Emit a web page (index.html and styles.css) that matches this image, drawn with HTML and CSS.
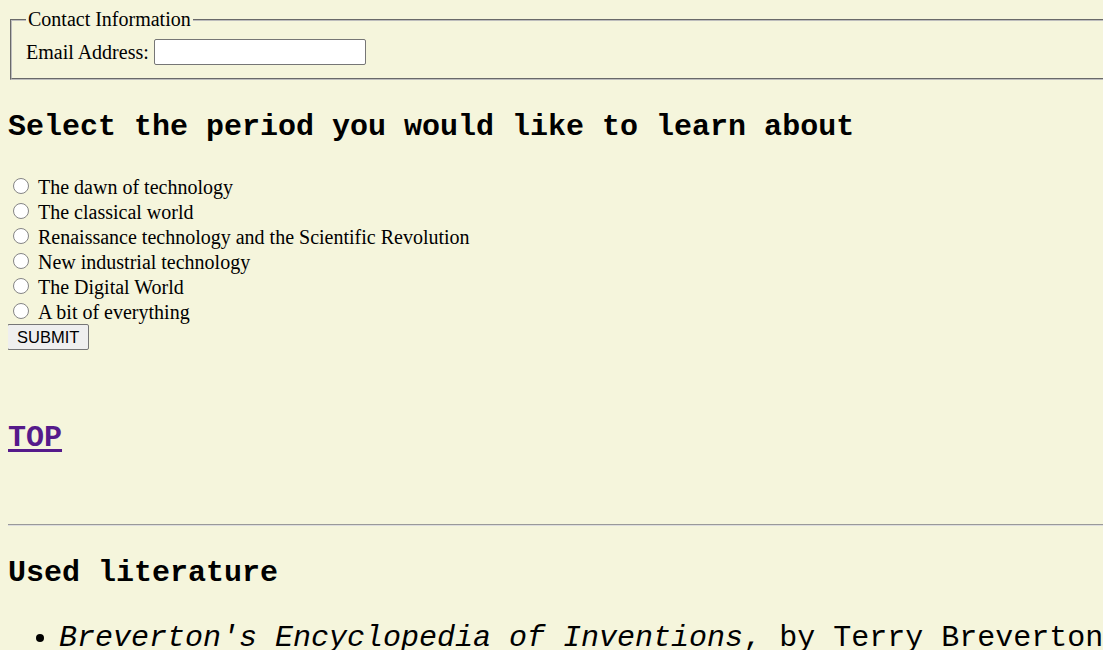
FILE: index.html
```html
<!DOCTYPE html>
<html>
<head>
<meta charset="utf-8">
<link rel="stylesheet" href="styles.css">
</head>
<body>
<form class="form">
  <fieldset class="contact">
    <legend class="contact-legend">Contact Information</legend>
    <label class="email-label">Email Address: <input class="email-input" type="text"></label>
  </fieldset>
  <h2 class="heading period-heading">Select the period you would like to learn about</h2>
  <div class="options">
    <label class="option"><input class="radio" type="radio" name="period"><span>The dawn of technology</span></label>
    <label class="option"><input class="radio" type="radio" name="period"><span>The classical world</span></label>
    <label class="option"><input class="radio" type="radio" name="period"><span>Renaissance technology and the Scientific Revolution</span></label>
    <label class="option"><input class="radio" type="radio" name="period"><span>New industrial technology</span></label>
    <label class="option"><input class="radio" type="radio" name="period"><span>The Digital World</span></label>
    <label class="option"><input class="radio" type="radio" name="period"><span>A bit of everything</span></label>
  </div>
  <button class="submit" type="button">SUBMIT</button>
</form>
<h2 class="heading top-heading"><a class="top-link" href="#">TOP</a></h2>
<hr class="rule">
<h2 class="heading lit-heading">Used literature</h2>
<ul class="lit-list">
  <li class="lit-item"><i>Breverton's Encyclopedia of Inventions</i>, by Terry Breverton</li>
</ul>
</body>
</html>
```
FILE: styles.css
```css
html {
  background: #f5f5dc;
  overflow: hidden;
}
body {
  margin: 8px -40px 8px 8px;
  font-family: "Liberation Serif", "Times New Roman", serif;
  font-size: 20px;
  color: #000;
}
.form {
  margin: 0;
}
.contact {
  margin: 0 2px;
  padding: 8px 14px 13px;
  border: 2px groove #bdbdbd;
}
.contact-legend {
  padding: 0 2px;
  font-size: 20px;
}
.email-label {
  display: inline-flex;
  align-items: center;
  gap: 5px;
}
.email-input {
  width: 212px;
  height: 26px;
  box-sizing: border-box;
  border: 1px solid #767676;
  border-radius: 2px;
  background: #fff;
  margin: 0;
}
.heading {
  font-family: "Liberation Mono", "Courier New", monospace;
  font-size: 30px;
  font-weight: bold;
  line-height: 34px;
}
.period-heading {
  margin: 30px 0 31px;
}
.options {
  display: flex;
  flex-direction: column;
}
.option {
  display: flex;
  align-items: center;
  height: 25px;
  gap: 9px;
}
.radio {
  appearance: none;
  -webkit-appearance: none;
  box-sizing: border-box;
  width: 16px;
  height: 16px;
  margin: 0 0 4px 5px;
  border: 1px solid #858585;
  border-radius: 50%;
  background: #fff;
}
.submit {
  display: block;
  font-family: "Liberation Sans", Arial, sans-serif;
  font-size: 16.5px;
  height: 26px;
  padding: 0 9px;
  margin: -1px 0 0 -1px;
  background: #efefef;
  border: 1px solid #767676;
  border-radius: 2px;
  color: #000;
}
.top-heading {
  margin: 71px 0 69px;
}
.top-link {
  color: #551a8b;
  text-decoration-thickness: 3px;
  text-underline-offset: 3px;
}
.rule {
  margin: 0;
  border: 0;
  border-top: 1px solid #999;
  height: 1px;
  background: #ddd;
}
.lit-heading {
  margin: 30px 0 31px;
}
.lit-list {
  margin: 0;
  padding-left: 51px;
  font-family: "Liberation Mono", "Courier New", monospace;
  font-size: 30px;
  line-height: 34px;
  white-space: nowrap;
}
```
